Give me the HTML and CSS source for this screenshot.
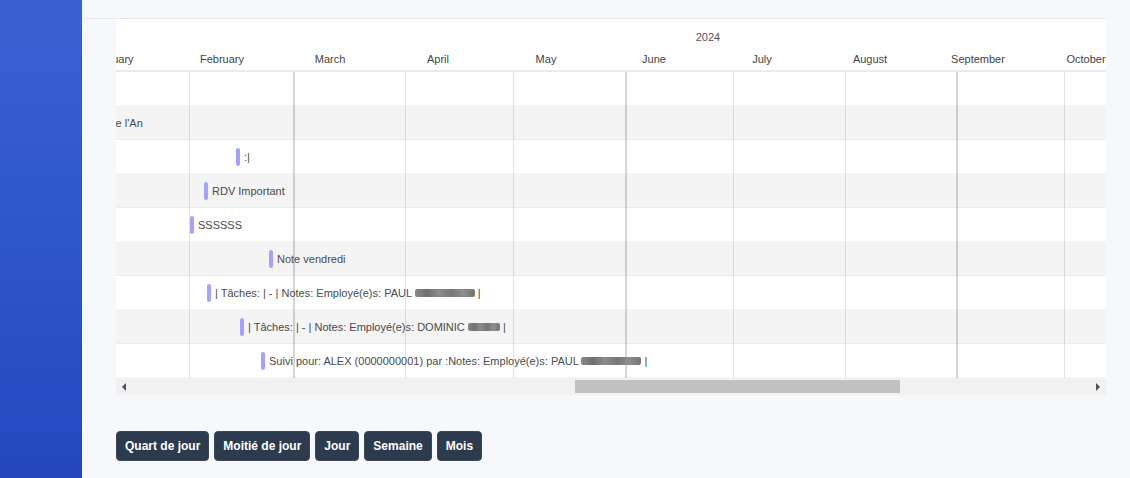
FILE: index.html
```html
<!DOCTYPE html>
<html lang="fr">
<head>
<meta charset="utf-8">
<title>Planification</title>
<link rel="stylesheet" href="styles.css">
</head>
<body>
<div class="layout">
  <aside class="sidebar"></aside>
  <main class="main">
    <div class="gantt-frame">
      <div class="gantt">
        <div class="gantt-header">
          <div class="year-row"><span class="year">2024</span></div>
          <div class="month-row">
            <span class="month">January</span>
            <span class="month">February</span>
            <span class="month">March</span>
            <span class="month">April</span>
            <span class="month">May</span>
            <span class="month">June</span>
            <span class="month">July</span>
            <span class="month">August</span>
            <span class="month">September</span>
            <span class="month">October</span>
            <span class="month">November</span>
          </div>
        </div>
        <div class="gantt-body">
          <div class="grid-lines">
            <span class="vline" style="left:73px"></span>
            <span class="vline thick" style="left:177px"></span>
            <span class="vline" style="left:289px"></span>
            <span class="vline" style="left:397px"></span>
            <span class="vline thick" style="left:509px"></span>
            <span class="vline" style="left:617px"></span>
            <span class="vline" style="left:729px"></span>
            <span class="vline thick" style="left:840px"></span>
            <span class="vline" style="left:948px"></span>
          </div>
          <div class="row"></div>
          <div class="row alt"><span class="label" style="margin-left:-31px">Jour de l'An</span></div>
          <div class="row" style="padding-left:120px"><span class="bar"></span><span class="label">:|</span></div>
          <div class="row alt" style="padding-left:88px"><span class="bar"></span><span class="label">RDV Important</span></div>
          <div class="row" style="padding-left:74px"><span class="bar"></span><span class="label">SSSSSS</span></div>
          <div class="row alt" style="padding-left:153px"><span class="bar"></span><span class="label">Note vendredi</span></div>
          <div class="row" style="padding-left:91px"><span class="bar"></span><span class="label">| Tâches: | - | Notes: Employé(e)s: PAUL <span class="redact redact-long"></span> |</span></div>
          <div class="row alt" style="padding-left:124px"><span class="bar"></span><span class="label">| Tâches: | - | Notes: Employé(e)s: DOMINIC <span class="redact redact-short"></span> |</span></div>
          <div class="row" style="padding-left:145px"><span class="bar"></span><span class="label">Suivi pour: ALEX (0000000001) par :Notes: Employé(e)s: PAUL <span class="redact redact-long"></span> |</span></div>
        </div>
        <div class="hscroll">
          <span class="scroll-btn"><span class="arrow arrow-left"></span></span>
          <div class="scroll-track"><span class="scroll-thumb"></span></div>
          <span class="scroll-btn"><span class="arrow arrow-right"></span></span>
        </div>
      </div>
    </div>
    <div class="view-buttons">
      <button class="btn" type="button">Quart de jour</button>
      <button class="btn" type="button">Moitié de jour</button>
      <button class="btn" type="button">Jour</button>
      <button class="btn" type="button">Semaine</button>
      <button class="btn" type="button">Mois</button>
    </div>
  </main>
</div>
</body>
</html>
```

FILE: styles.css
```css
* { box-sizing: border-box; }

html, body {
  margin: 0;
  padding: 0;
  height: 100%;
}

body {
  font-family: "Liberation Sans", Arial, sans-serif;
  background: #f7f8fc;
  overflow: hidden;
}

.layout {
  display: flex;
  height: 478px;
}

.sidebar {
  flex: none;
  width: 82px;
  background: linear-gradient(180deg, #3a60d2 0%, #2f55cb 50%, #2447be 100%);
}

.main {
  flex: 1;
  background: #f7f8fc;
  padding-top: 18px;
}

.gantt-frame {
  width: 1024px;
  border-top: 1px solid #e7e8ec;
  padding-left: 34px;
}

.gantt {
  width: 990px;
  overflow: hidden;
  background: #ffffff;
}

.gantt-header {
  height: 53px;
  padding-top: 11px;
  border-bottom: 2px solid #ebebeb;
  font-size: 11px;
  line-height: 14px;
  color: #444444;
}

.year-row {
  display: flex;
  height: 14px;
  margin-bottom: 8px;
}

.year {
  margin-left: 538px;
  width: 108px;
  text-align: center;
  color: #555555;
}

.month-row {
  display: flex;
  margin-left: -56px;
  height: 14px;
}

.month {
  flex: none;
  width: 108px;
  text-align: center;
  white-space: nowrap;
}

.gantt-body {
  position: relative;
  z-index: 0;
  background: #ffffff;
}

.grid-lines {
  position: absolute;
  inset: 0;
  z-index: -1;
}

.vline {
  position: absolute;
  top: 0;
  bottom: 0;
  width: 1px;
  background: #e2e2e2;
}

.vline.thick {
  width: 2px;
  background: #d6d6d6;
}

.row {
  display: flex;
  align-items: center;
  height: 34px;
  border-bottom: 1px solid rgba(0, 0, 0, 0.035);
  white-space: nowrap;
}

.row.alt {
  background: rgba(0, 0, 0, 0.045);
}

.bar {
  flex: none;
  width: 4px;
  height: 18px;
  border-radius: 2px;
  background: #a3a3ff;
  margin-right: 4px;
}

.label {
  font-size: 11px;
  color: #4a4a4a;
  white-space: nowrap;
}

.redact {
  display: inline-block;
  height: 8px;
  vertical-align: -0.5px;
  border-radius: 2px;
  background: linear-gradient(90deg, #8a8a8a 0%, #6f6f6f 20%, #8c8c8c 40%, #767676 60%, #8e8e8e 80%, #737373 100%);
  filter: blur(0.6px);
}

.redact-long { width: 60px; }
.redact-short { width: 32px; }

.hscroll {
  display: flex;
  height: 17px;
  background: #f1f1f1;
}

.scroll-btn {
  flex: none;
  width: 16px;
  display: flex;
  align-items: center;
  justify-content: center;
}

.arrow {
  width: 0;
  height: 0;
  border-top: 4px solid transparent;
  border-bottom: 4px solid transparent;
}

.arrow-left { border-right: 4px solid #505050; }
.arrow-right { border-left: 4px solid #505050; }

.scroll-track {
  flex: 1;
  display: flex;
  align-items: flex-start;
}

.scroll-thumb {
  margin-top: 2px;
  margin-left: 443px;
  width: 325px;
  height: 13px;
  background: #c1c1c1;
}

.view-buttons {
  display: flex;
  gap: 5px;
  margin-top: 36px;
  margin-left: 34px;
}

.btn {
  height: 30px;
  padding: 0 8px;
  border: 1px solid #3a4759;
  border-radius: 4px;
  background: #2d3b4e;
  color: #ffffff;
  font-family: "Liberation Sans", Arial, sans-serif;
  font-size: 12px;
  font-weight: bold;
  cursor: pointer;
}
```
